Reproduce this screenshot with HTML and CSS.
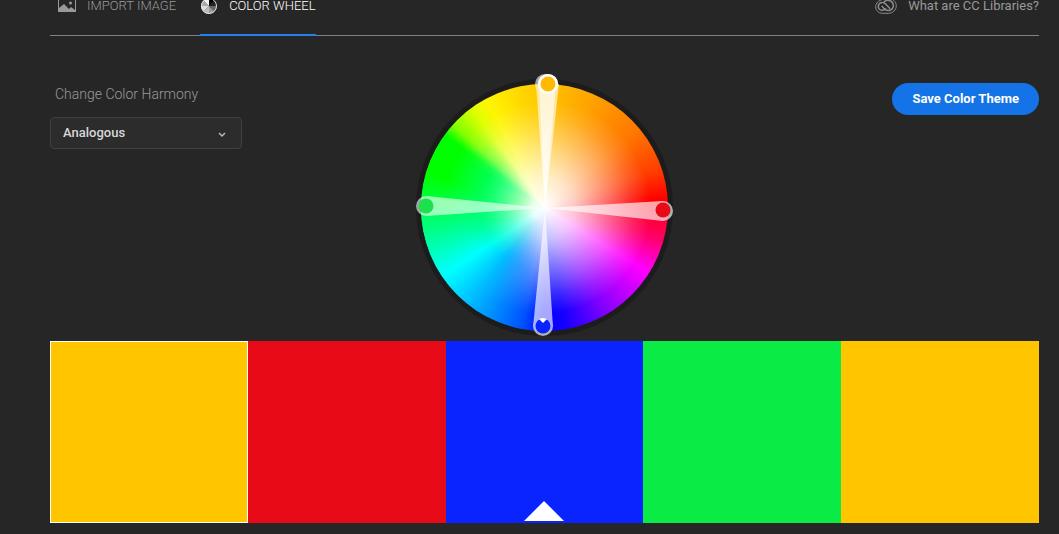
FILE: index.html
```html
<!DOCTYPE html>
<html lang="en">
<head>
<meta charset="utf-8">
<meta name="viewport" content="width=device-width, initial-scale=1">
<title>Color Wheel</title>
<link rel="stylesheet" href="styles.css">
</head>
<body>
<div class="page">
  <header class="topbar">
    <nav class="tabs">
      <button class="tab tab-image" type="button">
        <svg class="icon" width="18" height="18" viewBox="0 0 18 18" aria-hidden="true">
          <path fill="#999" fill-rule="evenodd" d="M0 1h18v14H0zM1 2v9l5-4 5 5 2-2 4 3V2z"/>
          <circle cx="12.500" cy="6" r="1.500" fill="#999"/>
        </svg>
        <span>IMPORT IMAGE</span>
      </button>
      <button class="tab tab-active" type="button">
        <svg class="icon" width="18" height="18" viewBox="0 0 18 18" aria-hidden="true">
          <path fill="#000" d="M9 9V1A8 8 0 0 1 14.660 3.340z"/>
          <path fill="#222" d="M9 9l5.660-5.660A8 8 0 0 1 17 9z"/>
          <path fill="#666" d="M9 9h8a8 8 0 0 1-2.340 5.660z"/>
          <path fill="#999" d="M9 9l5.660 5.660A8 8 0 0 1 9 17z"/>
          <path fill="#bbb" d="M9 9v8a8 8 0 0 1-5.660-2.340z"/>
          <path fill="#ddd" d="M9 9l-5.660 5.660A8 8 0 0 1 1 9z"/>
          <path fill="#aaa" d="M9 9H1a8 8 0 0 1 2.340-5.660z"/>
          <path fill="#f4f4f4" d="M9 9L3.340 3.340A8 8 0 0 1 9 1z"/>
          <circle cx="9" cy="9" r="7.500" fill="none" stroke="#ddd"/>
        </svg>
        <span>COLOR WHEEL</span>
      </button>
    </nav>
    <a class="help" href="#libraries">
      <svg class="icon" width="22" height="16" viewBox="0 0 22 16" fill="none" stroke="#8c8c8c" aria-hidden="true">
        <path d="M7.500 1.500C9 .8 11 .5 13 .5c4.500 0 8.300 3 8.300 7.200s-3.500 7.600-8 7.600H7.500C3.500 15.300.700 12.400.700 8.800c0-3.800 3-6.500 6.800-7.300z"/>
        <path stroke-width="1.500" d="M10.800 10.300c-1 1.400-2 2-3.500 2A3.900 3.900 0 0 1 3.300 8.400a3.900 3.900 0 0 1 4-3.900c1.500 0 2.400.6 3.400 1.600l4.300 4.600M8.800 4.200a4.700 4.700 0 0 1 4.300-1.800 5.200 5.200 0 0 1 5.300 5.200 5 5 0 0 1-5.200 4.900c-1.800 0-2.900-.5-4-1.700L6.700 8"/>
      </svg>
      <span>What are CC Libraries?</span>
    </a>
  </header>

  <main class="editor">
    <section class="harmony">
      <label class="harmony-label" for="harmony">Change Color Harmony</label>
      <div class="select-box">
        <select id="harmony" class="select">
          <option selected>Analogous</option>
          <option>Monochromatic</option>
          <option>Triad</option>
          <option>Complementary</option>
        </select>
        <svg class="chevron" width="8" height="6" viewBox="0 0 8 6" fill="none" stroke="#b8b8b8" stroke-width="1.500" aria-hidden="true"><path d="M1 1l3 3 3-3"/></svg>
      </div>
    </section>

    <div class="wheel">
      <div class="wheel-disc"></div>
      <svg class="wheel-arms" viewBox="-132 -137 264 270" role="img" aria-label="Color wheel with five color handles">
        <g fill="#fff">
          <g opacity=".65"><path d="M0 0L118-7V13z"/><circle cx="118" cy="3" r="10"/></g>
          <g opacity=".6"><path d="M0 0L-119-12V8z"/><circle cx="-119" cy="-2" r="10"/></g>
          <g opacity=".65"><path d="M0 0L-12 119H8z"/><circle cx="-2" cy="118" r="10"/></g>
          <g opacity=".6"><path d="M0 0L-9-124H11z"/><circle cx="0" cy="-124" r="10"/></g>
          <g opacity=".6"><path d="M0 0L-6-124H14z"/><circle cx="3" cy="-124" r="10"/></g>
        </g>
        <circle cx="118" cy="2" r="7.500" fill="#e80a16"/>
        <circle cx="-119" cy="-2" r="7.500" fill="#1ce04c"/>
        <circle cx="-2" cy="118" r="7.500" fill="#0a24ff"/>
        <path d="M-6 111Q-2 109 2 111L-2 115z" fill="#fff"/>
        <circle cx="3" cy="-124" r="8.800" fill="#ffb900" stroke="#fff" stroke-width="2.600"/>
      </svg>
    </div>

    <div class="actions">
      <button class="save" type="button">Save Color Theme</button>
    </div>
  </main>

  <section class="swatches" aria-label="Color theme">
    <button class="swatch amber selected" type="button" aria-label="Amber, selected"></button>
    <button class="swatch red" type="button" aria-label="Red"></button>
    <button class="swatch blue" type="button" aria-label="Blue, base color">
      <svg width="40" height="20" viewBox="0 0 40 20" aria-hidden="true"><path fill="#fff" d="M20 0l20 20H0z"/></svg>
    </button>
    <button class="swatch green" type="button" aria-label="Green"></button>
    <button class="swatch amber" type="button" aria-label="Amber"></button>
  </section>
</div>
</body>
</html>
```
FILE: styles.css
```css
* { box-sizing: border-box; }

body {
  margin: 0;
  background: #262626;
  color: #999;
  font: 14px/20px Roboto, "Open Sans", sans-serif;
}

button, select { font: inherit; color: inherit; }
button { border: 0; cursor: pointer; }

.page {
  display: flex;
  flex-direction: column;
  min-height: 100vh;
  padding: 0 20px 11px 50px;
}

.topbar {
  display: flex;
  justify-content: space-between;
  height: 36px;
  border-bottom: 1px solid #808080;
}

.tabs { display: flex; gap: 24px; }

.tab, .help {
  display: flex;
  align-items: center;
  height: 36px;
  padding: 0 0 24px;
  line-height: 12px;
  background: none;
  white-space: nowrap;
}

.tab { gap: 11px; font-size: 13px; font-weight: 300; }
.tab-image { padding-left: 8px; }
.tab-active {
  padding-bottom: 22px;
  border-bottom: 2px solid #2680eb;
  color: #fff;
}
.help { gap: 11px; font-size: 13px; color: #999; text-decoration: none; }
.icon { flex: none; }

.editor {
  display: grid;
  grid-template-columns: 1fr 264px 1fr;
  padding-top: 35px;
}

.harmony {
  display: flex;
  flex-direction: column;
  gap: 13px;
  width: 192px;
  padding-top: 13px;
}

.harmony-label { padding-left: 5px; font-weight: 300; }

.select-box { display: grid; align-items: center; }
.select-box > * { grid-area: 1 / 1; }

.select {
  appearance: none;
  width: 100%;
  height: 32px;
  padding: 0 12px;
  border: 1px solid #404040;
  border-radius: 4px;
  background: #2c2c2c;
  color: #d8d8d8;
  font-size: 13px;
  font-weight: 500;
}

.chevron {
  justify-self: end;
  margin: 3px 16px 0 0;
  pointer-events: none;
}

.wheel {
  --hues: conic-gradient(#ffc400 0deg, #ffa800 20deg, #ff7800 50deg, #ff3c00 72deg, #ff0000 86deg, #ff0066 105deg, #ff00ff 122deg, #8000ff 150deg, #1400ff 170deg, #0000ff 180deg, #0050ff 190deg, #009dff 210deg, #00ffff 236deg, #00ff80 260deg, #00ff28 278deg, #00ff00 286deg, #00ff00 306deg, #80ff00 312deg, #e0ff00 324deg, #fff500 332deg, #ffdc00 345deg, #ffc400 360deg);
  display: grid;
}
.wheel > * { grid-area: 1 / 1; }

.wheel-disc {
  width: 247px;
  height: 247px;
  margin: 13px 0 0 8px;
  border-radius: 50%;
  box-shadow: 0 0 0 5px #1c1c1c;
  background:
    radial-gradient(closest-side, #fff 0%, rgb(255 255 255 / .76) 25%, rgb(255 255 255 / .43) 50%, rgb(255 255 255 / .14) 72%, rgb(255 255 255 / 0) 86%),
    var(--hues);
}

/* Greens and cyans reach full saturation nearer the center. */
.wheel-disc::before {
  content: "";
  display: block;
  height: 100%;
  border-radius: 50%;
  background:
    radial-gradient(circle at 34% 44%, #00ff80 0%, rgb(0 255 110 / 0) 28%),
    var(--hues);
  mask-image:
    radial-gradient(closest-side, transparent 10%, rgb(0 0 0 / .85) 44%, #000 52%),
    conic-gradient(transparent 186deg, #000 218deg, #000 300deg, transparent 324deg);
  mask-composite: intersect;
}

.wheel-arms { width: 100%; z-index: 1; }

.actions { display: flex; justify-content: flex-end; padding-top: 12px; }

.save {
  height: 32px;
  padding: 0 20px;
  border-radius: 16px;
  background: #1473e6;
  color: #fff;
  font-size: 13px;
  font-weight: 700;
}

.swatches {
  display: grid;
  grid-template-columns: repeat(5, 1fr);
  flex: 1;
  min-height: 120px;
}

.swatch {
  display: flex;
  align-items: flex-end;
  justify-content: center;
  padding: 0 0 2px;
}

.swatch.selected { outline: 1px solid #fff; outline-offset: -1px; }
.amber { background: #ffc600; }
.red { background: #e80a16; }
.blue { background: #0a24ff; }
.green { background: #0aeb46; }
```
